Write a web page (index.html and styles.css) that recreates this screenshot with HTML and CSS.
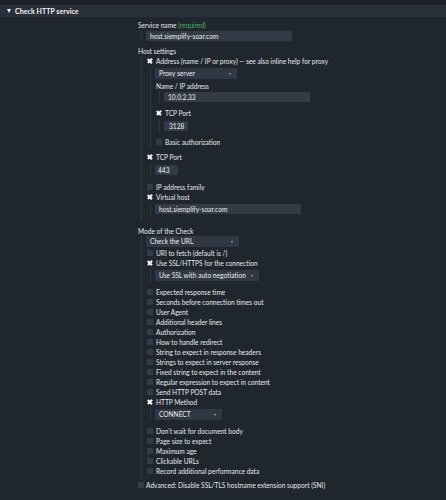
FILE: index.html
```html
<!DOCTYPE html>
<html>
<head>
<meta charset="utf-8">
<link rel="stylesheet" href="styles.css">
</head>
<body>
<div class="strip"></div>
<div class="titlebar"><span class="tri"></span><span class="title">Check HTTP service</span></div>
<div class="form">
  <div class="heading h-svc">Service name <span class="req">(required)</span></div>
  <div class="group g-svc"><div class="input w-wide">host.siemplify-soar.com</div></div>

  <div class="heading h-host">Host settings</div>
  <div class="group g-host">
    <div class="row"><span class="cb on"></span>Address (name / IP or proxy) -- see also inline help for proxy</div>
    <div class="nest n-addr">
      <div class="select w-proxy">Proxy server<span class="arrow"></span></div>
      <div class="sublabel">Name / IP address</div>
      <div class="nest n-ip"><div class="input w-wide">10.0.2.33</div></div>
      <div class="row r-tcp1"><span class="cb on"></span>TCP Port</div>
      <div class="nest n-port1"><div class="input w-port">3128</div></div>
      <div class="row r-basic"><span class="cb"></span>Basic authorization</div>
    </div>
    <div class="row r-tcp2"><span class="cb on"></span>TCP Port</div>
    <div class="nest n-port2"><div class="input w-443">443</div></div>
    <div class="row r-ipfam"><span class="cb"></span>IP address family</div>
    <div class="row"><span class="cb on"></span>Virtual host</div>
    <div class="nest n-vh"><div class="input w-wide">host.siemplify-soar.com</div></div>
  </div>

  <div class="heading h-mode">Mode of the Check</div>
  <div class="group g-mode">
    <div class="select w-url">Check the URL<span class="arrow"></span></div>
    <div class="row r-uri"><span class="cb"></span>URI to fetch (default is /)</div>
    <div class="row"><span class="cb on"></span>Use SSL/HTTPS for the connection</div>
    <div class="nest n-ssl"><div class="select w-ssl">Use SSL with auto negotiation<span class="arrow"></span></div></div>
    <div class="row r-exp"><span class="cb"></span>Expected response time</div>
    <div class="row"><span class="cb"></span>Seconds before connection times out</div>
    <div class="row"><span class="cb"></span>User Agent</div>
    <div class="row"><span class="cb"></span>Additional header lines</div>
    <div class="row"><span class="cb"></span>Authorization</div>
    <div class="row"><span class="cb"></span>How to handle redirect</div>
    <div class="row"><span class="cb"></span>String to expect in response headers</div>
    <div class="row"><span class="cb"></span>Strings to expect in server response</div>
    <div class="row"><span class="cb"></span>Fixed string to expect in the content</div>
    <div class="row"><span class="cb"></span>Regular expression to expect in content</div>
    <div class="row"><span class="cb"></span>Send HTTP POST data</div>
    <div class="row"><span class="cb on"></span>HTTP Method</div>
    <div class="nest n-method"><div class="select w-connect">CONNECT<span class="arrow"></span></div></div>
    <div class="row r-dont"><span class="cb"></span>Don't wait for document body</div>
    <div class="row"><span class="cb"></span>Page size to expect</div>
    <div class="row"><span class="cb"></span>Maximum age</div>
    <div class="row"><span class="cb"></span>Clickable URLs</div>
    <div class="row"><span class="cb"></span>Record additional performance data</div>
  </div>
  <div class="row r-adv"><span class="cb"></span>Advanced: Disable SSL/TLS hostname extension support (SNI)</div>
</div>
</body>
</html>
```
FILE: styles.css
```css
html, body {
  margin: 0;
  padding: 0;
  background: #20262e;
}
body {
  width: 446px;
  height: 500px;
  overflow: hidden;
  font-family: Lato, "Open Sans", sans-serif;
  font-size: 6.6px;
  color: #e6e8eb;
}
.strip {
  height: 5px;
  background: #1c2128;
}
.titlebar {
  height: 12px;
  background: #2a303a;
  display: flex;
  align-items: center;
  padding-left: 7px;
  font-weight: 700;
  font-size: 7px;
  color: #f2f3f5;
  letter-spacing: 0.05px;
}
.tri {
  width: 0;
  height: 0;
  border-left: 2.5px solid transparent;
  border-right: 2.5px solid transparent;
  border-top: 4px solid #f2f3f5;
  margin-right: 4px;
}
.form {
  padding: 3px 0 0 138px;
}
.heading, .sublabel {
  height: 9px;
  line-height: 9px;
  white-space: nowrap;
}
.h-svc { height: 10px; line-height: 10px; }
.req { color: #45b061; }
.h-host { margin-top: 6px; }
.h-mode { margin-top: 6px; }
.group {
  margin-left: 3px;
  border-left: 1px solid #2f3641;
  padding-left: 4px;
}
.g-svc { padding-top: 1px; }
.g-host { padding-bottom: 5px; }
.g-mode { padding-bottom: 4px; }
.nest {
  margin-left: 4px;
  border-left: 1px solid #2f3641;
  padding-left: 4px;
}
.row {
  height: 10px;
  display: flex;
  align-items: center;
  white-space: nowrap;
}
.cb {
  flex: none;
  width: 6px;
  height: 6px;
  margin: 0 3px 0 1px;
  background: #353c48;
  border-radius: 0.5px;
  position: relative;
}
.cb.on {
  background: transparent;
}
.cb.on::before, .cb.on::after {
  content: "";
  position: absolute;
  left: 0.4px;
  top: 2.2px;
  width: 5.6px;
  height: 1.8px;
  background: #f6f6f6;
  transform: rotate(45deg);
}
.cb.on::after {
  transform: rotate(-45deg);
}
.input, .select {
  box-sizing: border-box;
  height: 10px;
  line-height: 10px;
  background: #343b47;
  color: #eceef1;
  padding-left: 4px;
  white-space: nowrap;
  border-radius: 1px;
}
.select {
  height: 11px;
  line-height: 11px;
  background: #313844;
  position: relative;
}
.arrow {
  position: absolute;
  right: 6px;
  top: 5px;
  width: 0;
  height: 0;
  border-left: 1.5px solid transparent;
  border-right: 1.5px solid transparent;
  border-top: 2px solid #a6abb3;
}
.w-wide { width: 146px; }
.w-proxy { width: 82px; }
.w-port { width: 24px; padding-left: 5px; }
.w-443 { width: 23px; padding-left: 3px; }
.w-url { width: 93px; }
.w-ssl { width: 104px; }
.w-connect { width: 67px; }

.n-addr { padding-top: 2px; padding-bottom: 1px; }
.sublabel { margin-top: 3px; padding-left: 1px; }
.n-ip { padding: 1px 0 1px 4px; }
.r-tcp1 { margin-top: 5px; }
.n-port1 { margin-top: 1px; padding: 2px 0 2px 4px; }
.r-basic { margin-top: 4px; }
.r-tcp2 { margin-top: 4px; }
.n-port2 { margin-top: 1px; padding: 2px 0 2px 4px; }
.r-ipfam { margin-top: 5px; }
.n-vh { margin-top: 0; padding: 2px 0 2px 4px; }
.r-uri { margin-top: 1px; }
.n-ssl { margin-top: 1px; padding: 1px 0 2px 4px; }
.r-exp { margin-top: 4px; }
.n-method { padding: 2px 0 2px 4px; }
.r-dont { margin-top: 4px; }
.r-adv { margin-top: 0; }
.r-adv .cb { margin-left: 0; margin-right: 2px; }
```
